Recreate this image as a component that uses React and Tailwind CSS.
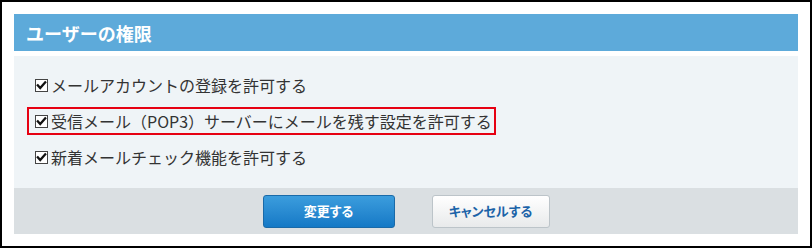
const FONT = "font-['Noto_Sans_CJK_JP','Noto_Sans',sans-serif]";

function Check() {
    return (
        <svg width="13" height="13" viewBox="0 0 13 13" className="shrink-0">
            <rect x="0.5" y="0.5" width="12" height="12" fill="#fff" stroke="#444" />
            <path d="M2.8 6.4 L5.2 9 L10.2 3.4" fill="none" stroke="#111" strokeWidth="2.3" strokeLinecap="square" />
        </svg>
    );
}

const rows = [
    { label: "メールアカウントの登録を許可する" },
    { label: "受信メール（POP3）サーバーにメールを残す設定を許可する", marked: true },
    { label: "新着メールチェック機能を許可する" },
];

export default function App() {
    return (
        <div className={`w-[812px] h-[248px] border-2 border-black bg-white p-[12px] ${FONT}`}>
            <div className="h-[37px] bg-[#5daada] flex items-center pl-[12px]">
                <h2 className="text-white font-bold text-[18px] leading-none">ユーザーの権限</h2>
            </div>
            <div className="mt-[5px] h-[132px] bg-[#eff4f7] pt-[15px] flex flex-col gap-[8px]">
                {rows.map((r) => (
                    <div
                        key={r.label}
                        className={`ml-[13px] self-start h-[28px] border-2 pl-[6px] pr-[2px] flex items-center gap-[3px] ${r.marked ? "border-[#e60012]" : "border-transparent"}`}
                    >
                        <Check />
                        <span className="text-[16px] leading-none text-[#333]">{r.label}</span>
                    </div>
                ))}
            </div>
            <div className="h-[46px] bg-[#dadfe2] flex items-center justify-center gap-[37px]">
                <button className="w-[132px] h-[33px] rounded-[3px] border border-[#1a6aa8] bg-gradient-to-b from-[#3b9ddd] to-[#1479c6] text-white font-bold text-[13px] [font-feature-settings:'palt']">
                    変更する
                </button>
                <button className="w-[118px] h-[33px] rounded-[3px] border border-[#bcc4c9] bg-gradient-to-b from-white to-[#e8eaeb] text-[#1b63a8] font-bold text-[13px] [font-feature-settings:'palt']">
                    キャンセルする
                </button>
            </div>
        </div>
    );
}
